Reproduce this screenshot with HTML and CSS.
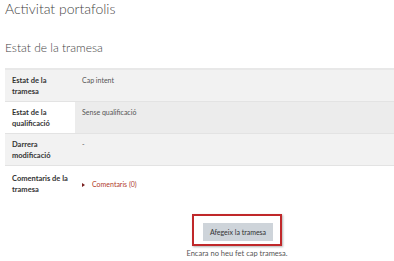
FILE: index.html
```html
<!DOCTYPE html>
<html lang="ca">
<head>
    <meta charset="UTF-8">
    <title>Activitat portafolis</title>
    <link rel="stylesheet" href="styles.css">
</head>
<body>
    <h2 class="page-title">Activitat portafolis</h2>
    <h3 class="section-title">Estat de la tramesa</h3>
    <table class="status-table">
        <tr class="odd">
            <th>Estat de la tramesa</th>
            <td>Cap intent</td>
        </tr>
        <tr class="even">
            <th>Estat de la qualificació</th>
            <td class="hover">Sense qualificació</td>
        </tr>
        <tr class="odd">
            <th>Darrera modificació</th>
            <td>-</td>
        </tr>
        <tr class="plain">
            <th>Comentaris de la tramesa</th>
            <td class="comments"><span class="arrow"></span><a href="#">Comentaris (0)</a></td>
        </tr>
    </table>
    <div class="submit-area">
        <div class="highlight">
            <button class="btn">Afegeix la tramesa</button>
        </div>
        <p class="note">Encara no heu fet cap tramesa.</p>
    </div>
</body>
</html>
```

FILE: styles.css
```css
body {
    margin: 0;
    padding: 0 0 0 5px;
    font-family: 'Lato', sans-serif;
    color: #333;
    background: #fff;
    overflow: hidden;
}

.page-title {
    margin: 0;
    font-size: 14px;
    font-weight: 300;
    line-height: 17px;
    color: #444;
}

.section-title {
    margin: 23px 0 0;
    font-size: 12px;
    font-weight: 300;
    line-height: 16px;
    color: #444;
}

.status-table {
    margin-top: 12px;
    width: 100%;
    border-collapse: collapse;
    border-top: 2px solid #e8e8e8;
    font-size: 7.5px;
}

.status-table th,
.status-table td {
    text-align: left;
    vertical-align: top;
    padding: 5px 5px 4px 7px;
    line-height: 11px;
    border-bottom: 1px solid #e3e3e3;
}

.status-table th {
    width: 58px;
    font-weight: 700;
    color: #333;
}

.status-table td {
    font-size: 7px;
    color: #555;
}

.status-table tr {
    height: 31px;
}

.odd th,
.odd td {
    background: #f2f2f2;
}

.even th {
    background: #fff;
}

.even td.hover {
    background: #ececec;
}

.plain th,
.plain td {
    border-bottom: none;
    padding-top: 7px;
}

.plain {
    height: 36px;
}

.comments {
    padding-top: 13px !important;
}

.arrow {
    display: inline-block;
    width: 0;
    height: 0;
    border-top: 2.5px solid transparent;
    border-bottom: 2.5px solid transparent;
    border-left: 3.5px solid #7a2020;
    margin-right: 7px;
    vertical-align: 0;
}

.comments a {
    color: #b03a2a;
    text-decoration: none;
}

.submit-area {
    display: flex;
    flex-direction: column;
    align-items: center;
    margin-top: 15px;
    padding-left: 75px;
}

.highlight {
    border: 2px solid #c0282a;
    padding: 7px 7px 3px 9px;
    box-shadow: 1px 1px 2px rgba(0, 0, 0, 0.3);
}

.btn {
    display: block;
    font-family: 'Lato', sans-serif;
    font-size: 7px;
    color: #333;
    background: #ced4da;
    border: none;
    padding: 4px 7px;
    line-height: 10px;
}

.note {
    margin: 3px 0 0;
    font-size: 7.5px;
    line-height: 10px;
    color: #555;
}
```
